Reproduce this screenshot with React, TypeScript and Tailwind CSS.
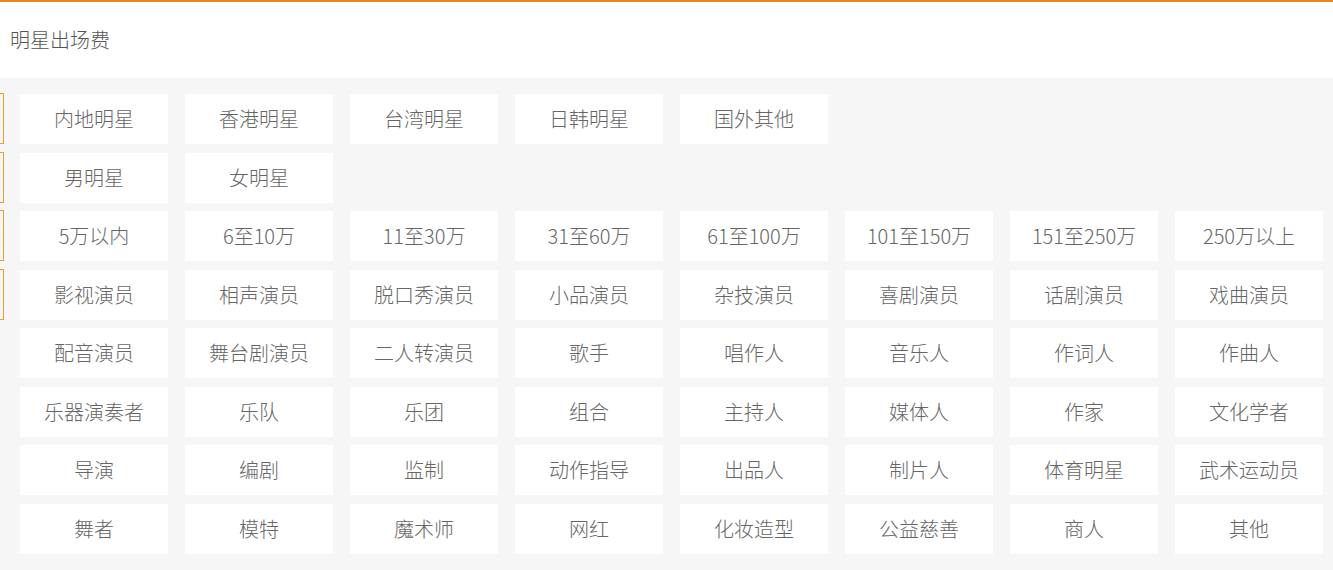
import React from "react";

type Row = { items: string[]; tab: boolean };

const rows: Row[] = [
  { items: ["内地明星", "香港明星", "台湾明星", "日韩明星", "国外其他"], tab: true },
  { items: ["男明星", "女明星"], tab: true },
  {
    items: ["5万以内", "6至10万", "11至30万", "31至60万", "61至100万", "101至150万", "151至250万", "250万以上"],
    tab: true,
  },
  { items: ["影视演员", "相声演员", "脱口秀演员", "小品演员", "杂技演员", "喜剧演员", "话剧演员", "戏曲演员"], tab: true },
  { items: ["配音演员", "舞台剧演员", "二人转演员", "歌手", "唱作人", "音乐人", "作词人", "作曲人"], tab: false },
  { items: ["乐器演奏者", "乐队", "乐团", "组合", "主持人", "媒体人", "作家", "文化学者"], tab: false },
  { items: ["导演", "编剧", "监制", "动作指导", "出品人", "制片人", "体育明星", "武术运动员"], tab: false },
  { items: ["舞者", "模特", "魔术师", "网红", "化妆造型", "公益慈善", "商人", "其他"], tab: false },
];

const font = { fontFamily: '"Microsoft YaHei", "Noto Sans CJK SC", "Noto Sans", sans-serif' };

export default function App() {
  return (
    <div className="w-[1333px] h-[570px] overflow-hidden bg-[#f6f6f6]" style={font}>
      <div className="border-t-2 border-[#f08219] bg-white h-[78px] flex items-center pl-[10px]">
        <span className="text-[20px] font-light text-[#555555] leading-none">明星出场费</span>
      </div>
      <div className="flex flex-col gap-[8.5px] pt-[16px]">
        {rows.map((row, i) => (
          <div key={i} className="flex h-[50px]">
            <div className="w-[20px] shrink-0 flex">
              {row.tab && (
                <div className="w-[4px] h-[51px] -mt-[1px] border-y border-r border-[#e3a32e]" />
              )}
            </div>
            <div className="flex gap-[17px]">
              {row.items.map((t) => (
                <div
                  key={t}
                  className="w-[148px] h-[50px] bg-white flex items-center justify-center text-[20px] font-light text-[#666666]"
                >
                  {t}
                </div>
              ))}
            </div>
          </div>
        ))}
      </div>
    </div>
  );
}
